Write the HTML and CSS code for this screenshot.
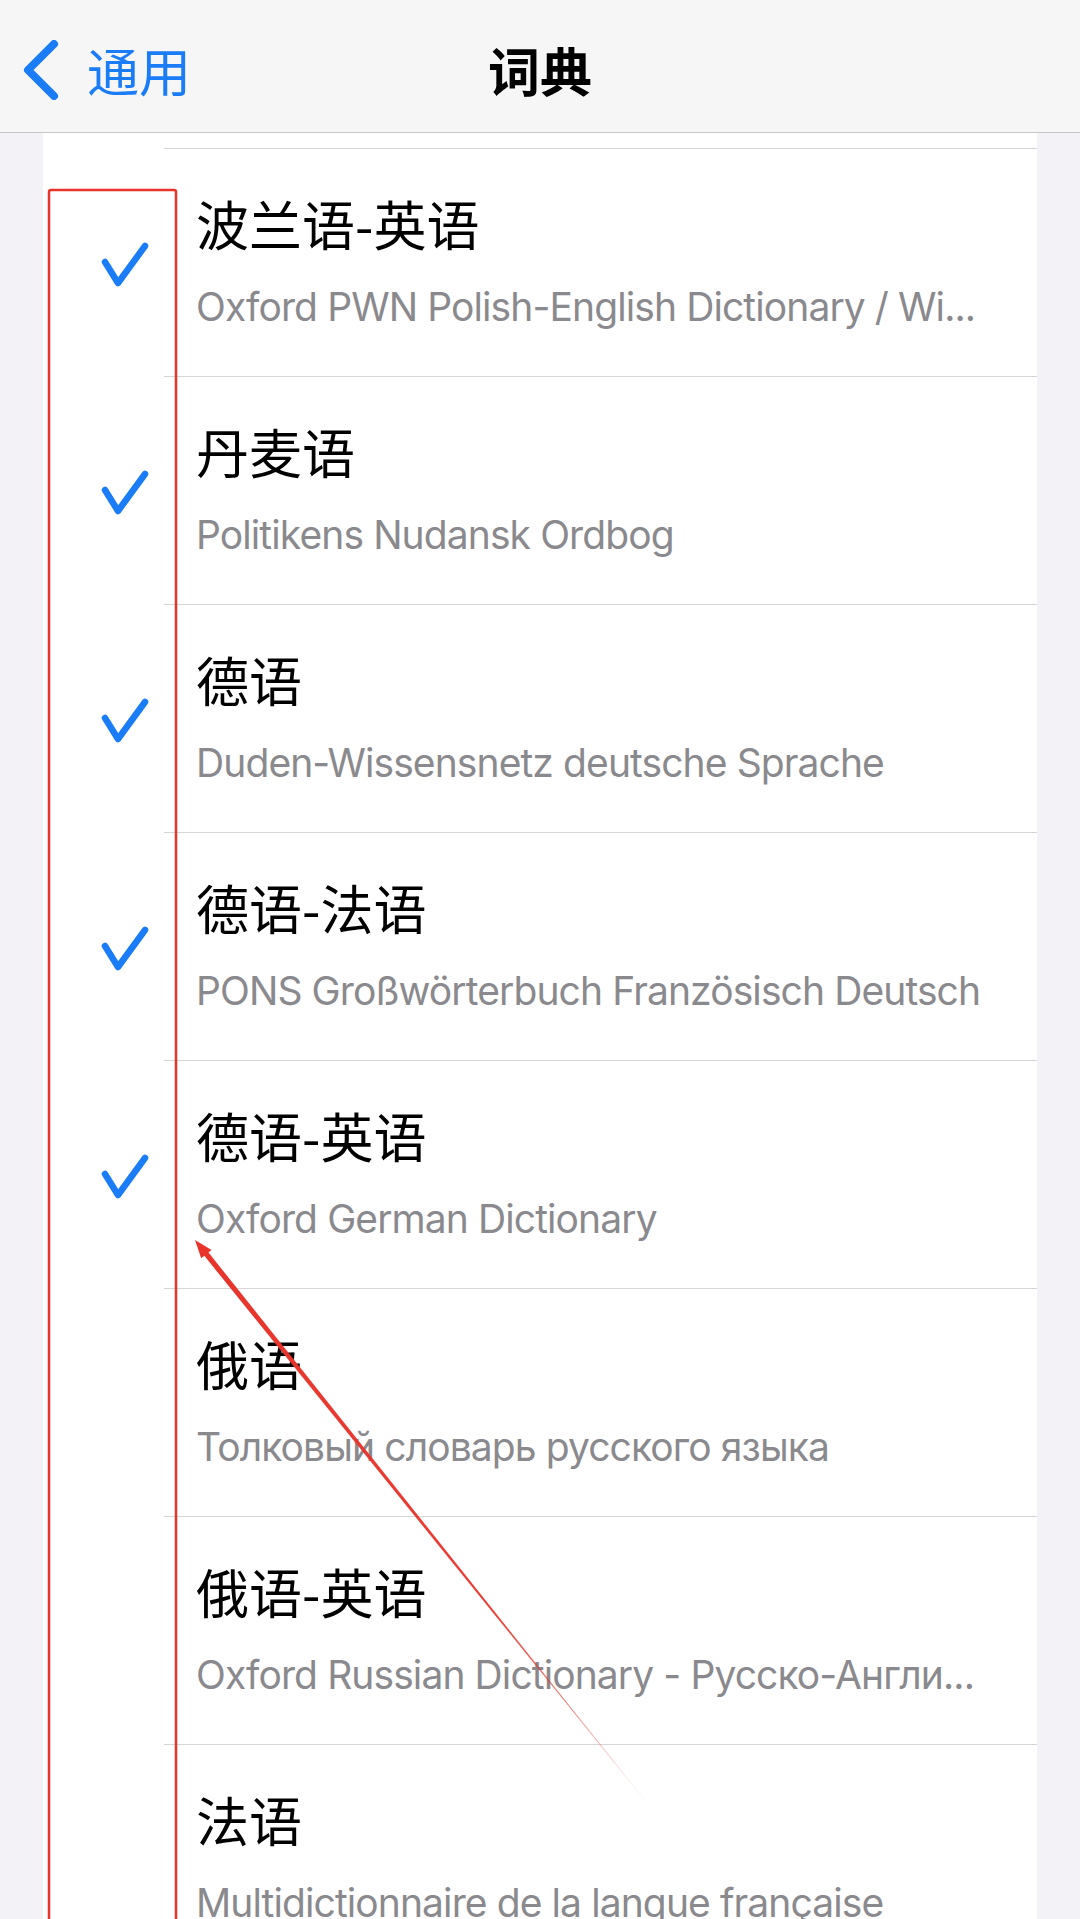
FILE: index.html
```html
<!DOCTYPE html>
<html lang="zh-CN">
<head>
<meta charset="utf-8">
<title>词典</title>
<link rel="stylesheet" href="styles.css">
</head>
<body>
<header class="navbar">
  <div class="back">
    <svg class="chevron" width="40" height="60" viewBox="0 0 40 60"><polyline points="32,4 6,30 32,56" fill="none" stroke="#1a7cf6" stroke-width="8" stroke-linecap="round" stroke-linejoin="round"/></svg>
    <span class="back-text">通用</span>
  </div>
  <h1 class="nav-title">词典</h1>
  <div class="nav-spacer"></div>
</header>

<main class="list">
  <div class="list-top"></div>

  <div class="row">
    <div class="check-col"><svg class="check" width="50" height="48" viewBox="0 0 50 48"><polyline points="5,21 18,42 45,5" fill="none" stroke="#1a7cf6" stroke-width="6.5" stroke-linecap="round" stroke-linejoin="round"/></svg></div>
    <div class="body"><div class="name">波兰语-英语</div><div class="desc">Oxford PWN Polish-English Dictionary / Wi...</div></div>
  </div>

  <div class="row">
    <div class="check-col"><svg class="check" width="50" height="48" viewBox="0 0 50 48"><polyline points="5,21 18,42 45,5" fill="none" stroke="#1a7cf6" stroke-width="6.5" stroke-linecap="round" stroke-linejoin="round"/></svg></div>
    <div class="body"><div class="name">丹麦语</div><div class="desc">Politikens Nudansk Ordbog</div></div>
  </div>

  <div class="row">
    <div class="check-col"><svg class="check" width="50" height="48" viewBox="0 0 50 48"><polyline points="5,21 18,42 45,5" fill="none" stroke="#1a7cf6" stroke-width="6.5" stroke-linecap="round" stroke-linejoin="round"/></svg></div>
    <div class="body"><div class="name">德语</div><div class="desc">Duden-Wissensnetz deutsche Sprache</div></div>
  </div>

  <div class="row">
    <div class="check-col"><svg class="check" width="50" height="48" viewBox="0 0 50 48"><polyline points="5,21 18,42 45,5" fill="none" stroke="#1a7cf6" stroke-width="6.5" stroke-linecap="round" stroke-linejoin="round"/></svg></div>
    <div class="body"><div class="name">德语-法语</div><div class="desc">PONS Großwörterbuch Französisch Deutsch</div></div>
  </div>

  <div class="row">
    <div class="check-col"><svg class="check" width="50" height="48" viewBox="0 0 50 48"><polyline points="5,21 18,42 45,5" fill="none" stroke="#1a7cf6" stroke-width="6.5" stroke-linecap="round" stroke-linejoin="round"/></svg></div>
    <div class="body"><div class="name">德语-英语</div><div class="desc">Oxford German Dictionary</div></div>
  </div>

  <div class="row">
    <div class="check-col"></div>
    <div class="body"><div class="name">俄语</div><div class="desc">Толковый словарь русского языка</div></div>
  </div>

  <div class="row">
    <div class="check-col"></div>
    <div class="body"><div class="name">俄语-英语</div><div class="desc">Oxford Russian Dictionary - Русско-Англи...</div></div>
  </div>

  <div class="row">
    <div class="check-col"></div>
    <div class="body"><div class="name">法语</div><div class="desc">Multidictionnaire de la langue française</div></div>
  </div>
</main>

<svg class="annotation" width="1080" height="1919" viewBox="0 0 1080 1919">
  <defs>
    <linearGradient id="fade" gradientUnits="userSpaceOnUse" x1="195" y1="1240" x2="655" y2="1813">
      <stop offset="0" stop-color="#e8342b" stop-opacity="1"/>
      <stop offset="0.65" stop-color="#e8342b" stop-opacity="0.95"/>
      <stop offset="0.88" stop-color="#e8342b" stop-opacity="0.45"/>
      <stop offset="1" stop-color="#e8342b" stop-opacity="0"/>
    </linearGradient>
  </defs>
  <rect x="49" y="190" width="127" height="1800" rx="2" fill="none" stroke="#e8342b" stroke-width="2.5"/>
  <polygon points="201.7,1252.6 205.9,1249.2 655.3,1813.3 654.7,1812.7" fill="url(#fade)"/>
  <polygon points="195,1240 211.5,1250 201.2,1258.3" fill="#e8342b"/>
</svg>
</body>
</html>
```

FILE: styles.css
```css
* {
  box-sizing: border-box;
}

html, body {
  margin: 0;
  padding: 0;
}

body {
  width: 1080px;
  height: 1919px;
  overflow: hidden;
  position: relative;
  background: #f2f2f7;
  font-family: "Noto Sans CJK SC", "Noto Sans", sans-serif;
  color: #000;
}

.navbar {
  height: 133px;
  background: #f6f6f6;
  border-bottom: 1px solid #c6c6c8;
  display: grid;
  grid-template-columns: 1fr auto 1fr;
  align-items: center;
  padding-top: 8px;
}

.back {
  display: flex;
  align-items: center;
  padding-left: 22px;
}

.chevron {
  display: block;
}

.back-text {
  margin-left: 25px;
  font-size: 52px;
  line-height: 60px;
  color: #1a7cf6;
}

.nav-title {
  margin: 0;
  font-size: 52px;
  line-height: 60px;
  font-weight: 700;
  text-align: center;
}

.list {
  margin: 0 43px;
  background: #fff;
}

.list-top {
  height: 15px;
}

.row {
  display: flex;
  height: 228px;
}

.check-col {
  width: 121px;
  flex: none;
  display: flex;
  align-items: center;
  padding-top: 6px;
}

.check {
  display: block;
  margin-left: 57px;
}

.body {
  flex: 1;
  min-width: 0;
  border-top: 1px solid #d6d6d9;
  padding-left: 32px;
  padding-right: 20px;
  padding-top: 43px;
}

.name {
  font-size: 53px;
  line-height: 62px;
  white-space: nowrap;
}

.desc {
  margin-top: 29px;
  font-family: Inter, "Noto Sans", sans-serif;
  font-size: 39px;
  letter-spacing: -0.9px;
  line-height: 48px;
  color: #8a8a8e;
  white-space: nowrap;
  overflow: hidden;
}

.annotation {
  position: absolute;
  left: 0;
  top: 0;
  pointer-events: none;
}
```
